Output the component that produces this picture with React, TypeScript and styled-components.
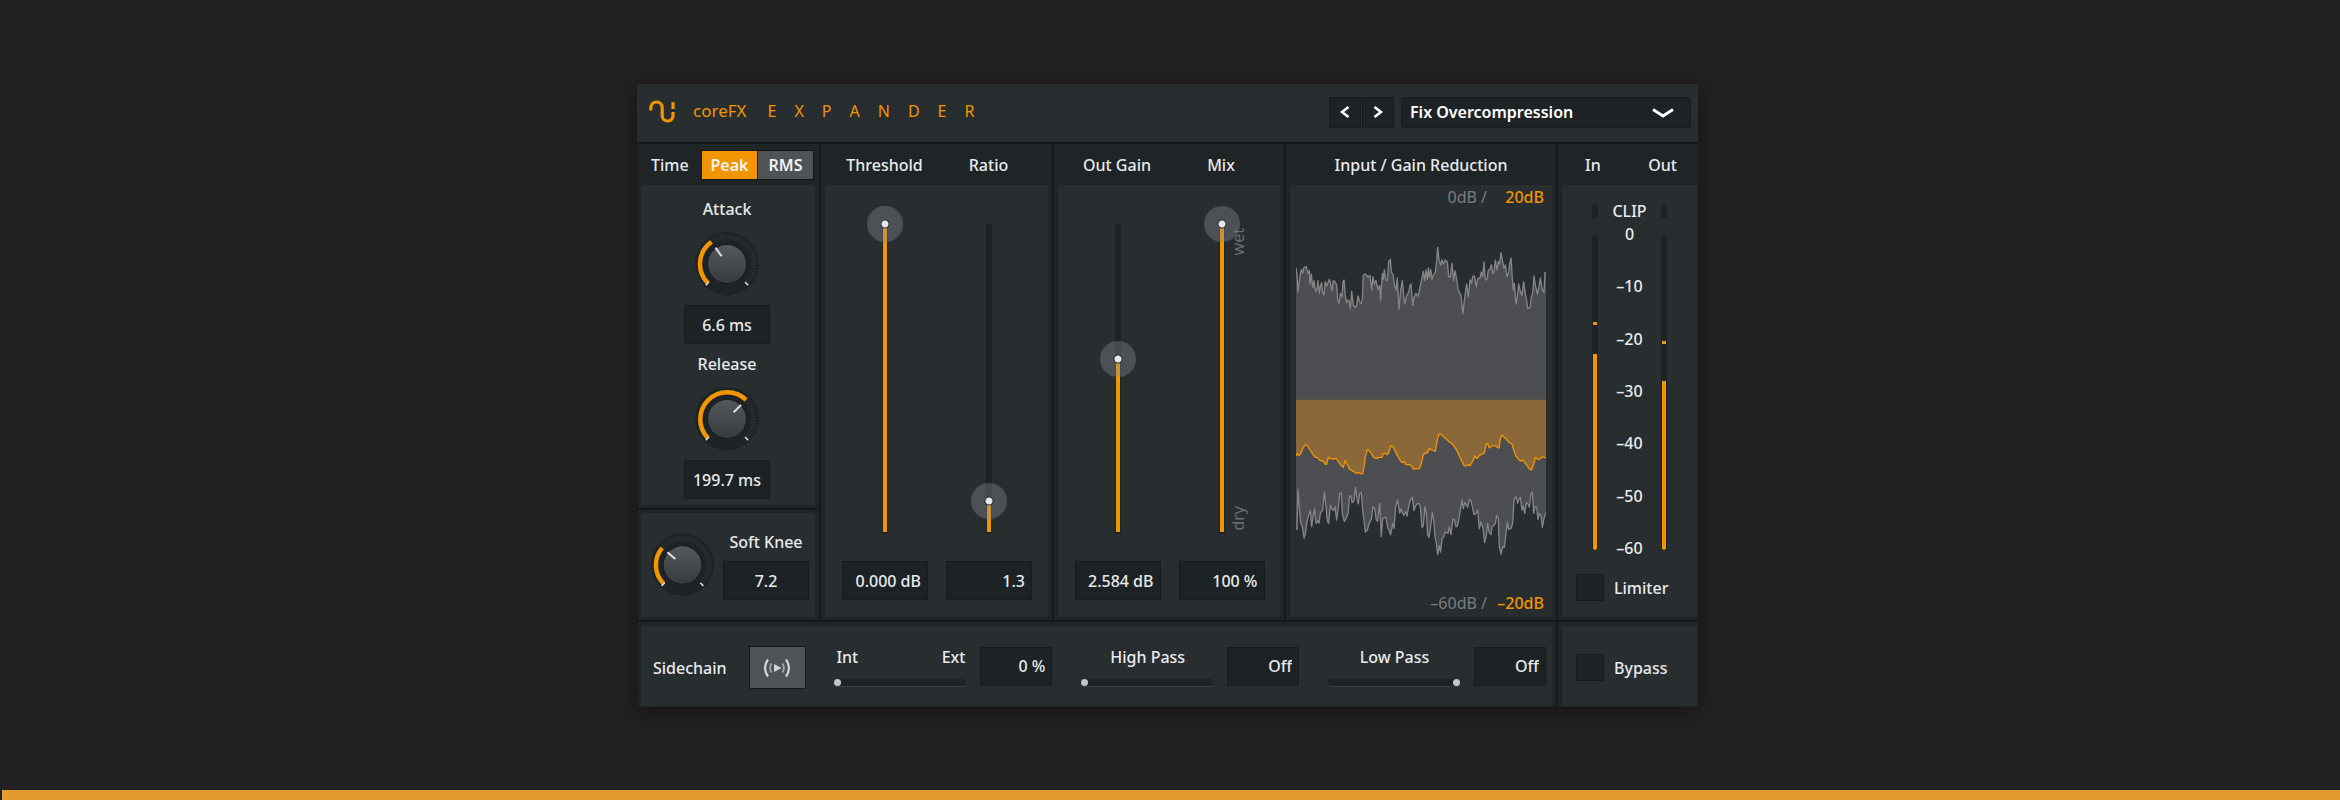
import React, { useId, useState } from 'react';
import styled, { createGlobalStyle, css } from 'styled-components';

const color = {
  page: '#222222',
  frame: '#1f2427',
  line: '#15191c',
  panel: '#282d30',
  well: '#1d2225',
  wellEdge: '#181c1f',
  accent: '#f19500',
  text: '#e9eaec',
  muted: '#7c7e80',
  key: '#4f5356',
};

const GlobalStyle = createGlobalStyle`
  *, *::before, *::after { box-sizing: border-box; }
  body {
    margin: 0;
    background: ${color.page};
    color: ${color.text};
    font-family: 'Noto Sans', 'Open Sans', sans-serif;
    font-size: 16px;
    font-weight: 500;
    line-height: 20px;
  }
  button, input, select { font: inherit; color: inherit; margin: 0; padding: 0; border: 0; border-radius: 0; }
`;

const Page = styled.div`
  min-height: 100vh;
  display: flex;
  flex-direction: column;
`;

const Stage = styled.main`
  flex: 1;
  display: flex;
  justify-content: center;
  align-items: flex-start;
  padding: 84px 5px 40px 0;
`;

const Footer = styled.div`
  height: 10px;
  margin-left: 2px;
  background: #e29b2e;
`;

const Plugin = styled.section`
  width: 100%;
  max-width: 1061px;
  background: ${color.frame};
  box-shadow: 0 4px 20px 4px rgba(0, 0, 0, 0.3);
`;

const TopBar = styled.header`
  height: 58px;
  display: flex;
  align-items: center;
  padding: 0 7px 2px 12px;
  background: ${color.panel};
`;

const Brand = styled.div`
  display: flex;
  align-items: center;
  padding-bottom: 2px;
  color: ${color.accent};
`;

const BrandName = styled.span`
  margin-left: 18px;
  font-size: 17px;
  font-weight: 400;
`;

const Product = styled.h1`
  display: flex;
  gap: 18px;
  margin: 0 auto 0 21px;
  padding-bottom: 2px;
  font-size: 16px;
  font-weight: 400;
  color: ${color.accent};
`;

const Presets = styled.div`
  display: flex;
  margin-left: auto;
`;

const StepButton = styled.button`
  width: 32px;
  height: 31px;
  margin-right: 1px;
  display: grid;
  place-items: center;
  background: ${color.well};
  border: 1px solid ${color.wellEdge};
`;

const SelectWrap = styled.div`
  position: relative;
  width: 290px;
  margin-left: 6px;
  svg {
    position: absolute;
    right: 17px;
    top: 11px;
    pointer-events: none;
  }
`;

const PresetSelect = styled.select`
  appearance: none;
  width: 100%;
  height: 31px;
  padding: 0 40px 0 8px;
  background: ${color.well};
  border: 1px solid ${color.wellEdge};
  border-radius: 3px;
  color: #fff;
  font-weight: 600;
`;

const MainGrid = styled.div`
  display: grid;
  grid-template-columns: 182fr 233fr 232fr 272fr 142fr;
  border-top: 2px solid ${color.line};
`;

const FootGrid = styled.div`
  display: grid;
  grid-template-columns: 919fr 142fr;
  border-top: 2px solid ${color.line};
`;

const Cell = styled.div<{ $edge?: 'left' | 'right' }>`
  display: flex;
  flex-direction: column;
  min-width: 0;
  padding: 0 ${p => (p.$edge === 'right' ? 1 : 4)}px 3px ${p => (p.$edge === 'left' ? 3 : 4)}px;
  border-left: ${p => (p.$edge === 'left' ? 1 : 2)}px solid ${color.line};
`;

const FootCell = styled(Cell)`
  padding-top: 4px;
  padding-bottom: 1px;
`;

const Strip = styled.div<{ $gap?: number }>`
  height: 41px;
  display: flex;
  align-items: center;
  justify-content: center;
  gap: ${p => p.$gap ?? 0}px;
`;

const StripLabel = styled.span<{ $width?: number }>`
  width: ${p => (p.$width ? `${p.$width}px` : 'auto')};
  text-align: center;
  white-space: nowrap;
`;

const TimeStrip = styled(Strip)`
  justify-content: space-between;
  padding: 0 1px 0 10px;
`;

const Segments = styled.div`
  display: flex;
  gap: 1px;
  padding: 1px;
  background: ${color.line};
`;

const Segment = styled.button<{ $on: boolean }>`
  width: 55px;
  height: 28px;
  font-weight: 600;
  color: #f4f4f5;
  background: ${p => (p.$on ? color.accent : color.key)};
`;

const panelBase = css`
  background: ${color.panel};
`;

const FaderPanel = styled.div`
  ${panelBase}
  flex: 1;
  display: flex;
  justify-content: center;
  gap: 18px;
  padding: 21px 0 17px 1px;
`;

const FaderColumn = styled.div`
  position: relative;
  display: flex;
  flex-direction: column;
  align-items: center;
  gap: 9px;
`;

const Fader = styled.input<{ $level: number }>`
  appearance: none;
  writing-mode: vertical-lr;
  direction: rtl;
  width: 36px;
  height: 346px;
  outline: none;
  background:
    linear-gradient(to top, ${color.accent} ${p => Math.round(p.$level * 310)}px, transparent 0) center 18px / 4px 308px no-repeat,
    linear-gradient(${color.well}, ${color.well}) center 18px / 6px 310px no-repeat;
  &::-webkit-slider-runnable-track { width: 36px; height: 346px; background: none; }
  &::-webkit-slider-thumb {
    appearance: none;
    width: 36px;
    height: 36px;
    border-radius: 50%;
    background: radial-gradient(circle, #e6e7ea 0 3px, #2a2c2e 4px, #2a2c2e 4px, rgba(140, 144, 150, 0.36) 5px);
  }
`;

const FaderNote = styled.span<{ $top: number }>`
  position: absolute;
  left: 49px;
  top: ${p => p.$top}px;
  writing-mode: vertical-rl;
  transform: rotate(180deg);
  font-weight: 400;
  color: #6a6e71;
`;

const ValueBox = styled.input<{ $narrow?: boolean; $align?: string }>`
  width: ${p => (p.$narrow ? 72 : 86)}px;
  height: 39px;
  padding: 0 6px;
  text-align: ${p => p.$align ?? 'right'};
  background: ${color.well};
  border: 1px solid ${color.wellEdge};
`;

const KnobPanel = styled.div`
  ${panelBase}
  display: flex;
  flex-direction: column;
  align-items: center;
  height: 320px;
  padding: 14px 2px 0 0;
`;

const KnobGroup = styled.div`
  display: flex;
  flex-direction: column;
  align-items: center;
  margin-bottom: 10px;
  svg { margin: 12px 0 8px; }
`;

const Divider = styled.div`
  height: 2px;
  margin: 3px -4px 3px -3px;
  background: ${color.line};
`;

const KneePanel = styled.div`
  ${panelBase}
  flex: 1;
  display: flex;
  align-items: center;
  gap: 8px;
  padding: 0 6px 0 9px;
`;

const KneeValue = styled.div`
  display: flex;
  flex-direction: column;
  align-items: center;
  gap: 9px;
  margin-top: 2px;
`;

const GraphPanel = styled.div`
  ${panelBase}
  flex: 1;
  display: flex;
  flex-direction: column;
  padding: 2px 6px 4px;
`;

const Range = styled.div`
  display: grid;
  grid-template-columns: 1fr 57px;
  padding-right: 2px;
  text-align: right;
  font-weight: 400;
  color: ${color.muted};
  b { font-weight: 500; color: ${color.accent}; }
`;

const Wave = styled.svg`
  display: block;
  width: 100%;
  height: 325px;
  margin: 33px 0 auto;
`;

const MeterPanel = styled.div`
  ${panelBase}
  flex: 1;
  display: flex;
  flex-direction: column;
  padding: 16px 14px 0;
`;

const Meters = styled.div`
  display: grid;
  grid-template-columns: 6px 1fr 6px;
  padding: 0 16px;
  height: 362px;
`;

const MeterColumn = styled.div`
  display: flex;
  flex-direction: column;
  gap: 16px;
  padding-top: 3px;
`;

const ClipLight = styled.div`
  height: 15px;
  border-radius: 3px;
  background: ${color.well};
  box-shadow: 0 1px 0 #303538;
`;

const MeterRail = styled.div`
  position: relative;
  height: 316px;
  border-radius: 3px;
  background: ${color.well};
`;

const MeterFill = styled.div<{ $height: number }>`
  position: absolute;
  left: 1px;
  right: 1px;
  bottom: 1px;
  height: ${p => p.$height}px;
  background: ${color.accent};
  border-radius: 0 0 2px 2px;
`;

const MeterPeak = styled.div<{ $top: number }>`
  position: absolute;
  left: 1px;
  right: 1px;
  top: ${p => p.$top}px;
  height: 3px;
  background: ${color.accent};
`;

const Scale = styled.div`
  display: flex;
  flex-direction: column;
  text-align: center;
`;

const ScaleMarks = styled.div`
  margin-top: 3px;
  display: flex;
  flex-direction: column;
  justify-content: space-between;
  height: 334px;
`;

const Check = styled.label`
  display: flex;
  align-items: center;
  gap: 10px;
`;

const CheckBox = styled.input`
  appearance: none;
  width: 28px;
  height: 27px;
  background: ${color.well};
  border: 1px solid ${color.wellEdge};
  &:checked { background: ${color.accent}; }
`;

const LimiterRow = styled.div`
  margin-top: 11px;
`;

const MeterStrip = styled(Strip)`
  justify-content: space-between;
  padding: 0 20px 0 23px;
`;

const BypassPanel = styled.div`
  ${panelBase}
  height: 80px;
  display: flex;
  align-items: center;
  padding: 3px 14px 0;
`;

const SidePanel = styled.div`
  ${panelBase}
  height: 80px;
  display: flex;
  align-items: center;
  justify-content: space-between;
  padding: 0 6px 0 12px;
`;

const SideSwitch = styled.div`
  display: flex;
  align-items: center;
  gap: 22px;
  padding-top: 3px;
`;

const ListenButton = styled.button`
  width: 57px;
  height: 43px;
  display: grid;
  place-items: center;
  background: ${color.key};
  border: 1px solid ${color.line};
`;

const FilterGroup = styled.div`
  display: flex;
  align-items: center;
  gap: 14px;
`;

const FilterControl = styled.div`
  width: 132px;
`;

const FilterLabels = styled.div<{ $spread?: boolean }>`
  display: flex;
  justify-content: ${p => (p.$spread ? 'space-between' : 'center')};
  padding: 0 1px 0 2px;
  margin-bottom: 12px;
`;

const FilterSlider = styled.input`
  appearance: none;
  display: block;
  width: 132px;
  height: 7px;
  border-radius: 4px;
  background: ${color.well};
  box-shadow: 0 1px 0 #3a3f42;
  &::-webkit-slider-thumb {
    appearance: none;
    width: 7px;
    height: 7px;
    border-radius: 50%;
    background: #c3c6c9;
  }
`;

/* Knob drawing: angles are degrees clockwise from twelve o'clock. */
const polar = (angle: number, r: number) => {
  const a = (angle * Math.PI) / 180;
  return `${(33 + r * Math.sin(a)).toFixed(2)} ${(33 - r * Math.cos(a)).toFixed(2)}`;
};
const arc = (from: number, to: number, r: number) =>
  `M${polar(from, r)}A${r} ${r} 0 ${to - from > 180 ? 1 : 0} 1 ${polar(to, r)}`;

function Knob({ angle, label }: { angle: number; label: string }) {
  const id = useId();
  return (
    <svg width="66" height="66" viewBox="0 0 66 66" role="img" aria-label={label}>
      <defs>
        <linearGradient id={id} x1="0" y1="0" x2="0" y2="1">
          <stop offset="0" stopColor="#55595c" />
          <stop offset="1" stopColor="#373b3f" />
        </linearGradient>
      </defs>
      <circle cx="33" cy="34" r="32" fill="#303538" />
      <circle cx="33" cy="33" r="32" fill="#1e2326" />
      <path d={arc(angle + 3, 132, 27)} stroke="#2b3033" strokeWidth="5" strokeDasharray="1.5 1.2" fill="none" />
      <path d={arc(-135, angle, 27)} stroke={color.accent} strokeWidth="4.5" fill="none" />
      <path d={`M${polar(-135, 25.5)}L${polar(-135, 30)}M${polar(135, 25.5)}L${polar(135, 30)}`} stroke="#d9dbdd" strokeWidth="1.6" />
      <circle cx="33" cy="33" r="20" fill="#1a1e21" />
      <circle cx="33" cy="33" r="19" fill={`url(#${id})`} />
      <path d={`M${polar(angle, 9.5)}L${polar(angle, 20)}`} stroke="#dfe1e3" strokeWidth="2" />
    </svg>
  );
}

const inputTop =
  '0,83 3,104 6,155 12,108 16,88 20,100 24,82 31,80 36,100 40,92 42,132 46,102 50,142 54,122 59,155 63,148 66,122 70,160 73,140 77,128 80,158 84,165 88,124 92,138 96,128 100,118 104,132 108,152 112,122 118,126 122,136 125,180 129,190 133,160 138,170 141,125 144,120 148,168 152,188 155,180 159,182 163,206 167,154 172,196 178,202 182,196 186,168 192,188 196,190 199,178 202,105 209,102 216,112 222,106 227,150 231,110 235,132 240,122 246,148 251,136 254,182 259,100 262,118 265,88 269,118 274,122 278,64 283,58 286,96 291,104 296,138 300,150 304,114 309,208 314,150 319,122 323,168 326,192 332,166 338,158 342,136 345,132 350,196 354,172 360,160 366,170 372,142 376,124 382,94 386,122 390,90 394,118 397,84 400,112 404,88 408,118 412,105 418,98 422,62 425,22 429,60 434,75 438,60 442,72 448,60 454,66 458,110 463,112 468,70 473,122 477,92 482,118 486,146 490,158 494,162 498,196 501,220 504,190 508,158 512,132 517,170 522,120 526,130 530,110 535,108 541,140 545,116 552,114 556,96 560,110 564,66 568,120 573,118 577,90 582,88 586,74 590,100 594,96 598,60 603,90 607,64 611,72 615,38 619,60 624,85 628,75 633,110 638,98 641,72 645,54 649,118 652,150 655,130 660,192 666,156 668,132 674,158 678,166 683,125 687,156 691,176 695,205 702,202 706,172 710,160 714,108 719,140 724,162 729,140 733,114 738,146 744,158 747,98 750,96';

const inputBottom =
  '750,818 744,835 739,862 735,826 730,820 726,838 722,800 717,800 713,820 709,756 705,762 700,802 696,792 691,788 686,820 682,798 678,810 673,772 668,780 665,790 660,770 654,778 650,850 645,866 638,868 634,846 630,880 625,922 620,920 615,942 610,920 607,834 602,826 598,850 592,858 588,860 585,884 580,878 575,850 571,886 566,908 561,866 555,846 550,866 545,810 540,820 534,824 529,800 524,780 520,778 515,802 511,795 506,788 502,806 498,780 493,810 488,840 484,858 480,860 476,840 471,836 465,884 460,860 456,880 452,878 447,876 443,892 438,896 434,936 430,918 425,944 421,908 417,890 413,840 409,818 405,850 399,892 395,884 391,820 387,800 382,858 378,864 373,800 369,790 363,792 359,798 354,812 349,772 343,780 338,800 333,828 329,814 324,826 319,818 315,806 311,820 305,780 299,800 294,866 290,850 284,884 279,870 275,862 270,832 266,832 260,836 256,890 251,790 245,844 241,840 236,806 231,800 226,838 220,848 214,870 208,876 204,840 200,812 196,758 191,760 187,792 183,776 178,742 174,782 168,788 165,768 161,768 156,820 150,836 145,844 139,820 136,758 131,762 127,802 122,840 117,800 112,812 107,806 103,796 98,850 94,842 90,800 85,756 80,810 73,820 69,850 66,842 60,850 56,806 52,826 47,860 43,812 38,826 33,844 28,880 24,894 19,860 14,848 10,800 6,748 3,868 0,864';

const reduction =
  '0,648 4,640 9,647 15,638 22,622 28,614 34,616 42,630 50,642 58,652 64,652 72,662 80,662 88,672 92,673 97,652 104,656 112,657 120,655 127,664 134,675 142,682 147,662 153,672 160,686 166,691 173,694 180,700 187,698 194,701 200,701 204,680 208,650 214,629 219,631 226,640 233,652 241,655 250,652 258,652 262,640 268,640 274,644 279,634 284,618 290,618 296,630 304,646 312,660 318,668 324,664 330,674 338,674 345,676 352,687 360,686 370,686 376,670 382,644 388,638 393,640 400,626 408,630 418,634 424,600 429,582 436,583 444,592 452,598 460,606 468,611 475,620 482,630 490,648 498,664 504,676 510,678 516,674 522,677 530,664 537,648 543,656 550,646 560,642 566,636 570,614 575,610 580,624 588,618 596,616 604,622 609,624 614,592 618,585 624,592 632,598 640,608 648,612 654,634 660,648 668,658 674,664 680,660 690,672 698,684 706,690 712,676 718,652 725,658 732,656 740,650 750,654';

function Waveform() {
  return (
    <Wave viewBox="0 0 750 975" preserveAspectRatio="none" role="img" aria-label="Input level and gain reduction over time">
      <polygon points={`${inputTop} ${inputBottom}`} fill="#4d4e51" />
      <polygon points={`0,479 ${reduction} 750,479`} fill="#8a683a" />
      <polyline points={inputTop} fill="none" stroke="#858587" strokeWidth="4" strokeLinejoin="round" />
      <polyline points={inputBottom} fill="none" stroke="#858587" strokeWidth="4" strokeLinejoin="round" />
      <polyline points={reduction} fill="none" stroke={color.accent} strokeWidth="4" strokeLinejoin="round" />
    </Wave>
  );
}

type FaderData = { name: string; level: number; value: string };

const faders: Record<string, FaderData> = {
  threshold: { name: 'Threshold', level: 1000, value: '0.000 dB' },
  ratio: { name: 'Ratio', level: 108, value: '1.3' },
  gain: { name: 'Out Gain', level: 565, value: '2.584 dB' },
  mix: { name: 'Mix', level: 1000, value: '100 %' },
};

function FaderStrip({ data, children }: { data: FaderData; children?: React.ReactNode }) {
  const [level, setLevel] = useState(data.level);
  return (
    <FaderColumn>
      <Fader
        type="range"
        min={0}
        max={1000}
        value={level}
        $level={level / 1000}
        aria-label={data.name}
        onChange={e => setLevel(Number(e.target.value))}
      />
      {children}
      <ValueBox aria-label={`${data.name} value`} defaultValue={data.value} />
    </FaderColumn>
  );
}

function FaderCell({ items, notes }: { items: FaderData[]; notes?: React.ReactNode }) {
  return (
    <Cell>
      <Strip $gap={18}>
        {items.map(i => (
          <StripLabel key={i.name} $width={86}>{i.name}</StripLabel>
        ))}
      </Strip>
      <FaderPanel>
        {items.map((i, n) => (
          <FaderStrip key={i.name} data={i}>{n === items.length - 1 ? notes : null}</FaderStrip>
        ))}
      </FaderPanel>
    </Cell>
  );
}

function Meter({ fill, peak }: { fill: number; peak: number }) {
  return (
    <MeterColumn>
      <ClipLight />
      <MeterRail>
        <MeterPeak $top={peak} />
        <MeterFill $height={fill} />
      </MeterRail>
    </MeterColumn>
  );
}

function Filter({ labels, name, position, value }: { labels: string[]; name: string; position: number; value: string }) {
  return (
    <FilterGroup>
      <FilterControl>
        <FilterLabels $spread={labels.length > 1}>
          {labels.map(l => <span key={l}>{l}</span>)}
        </FilterLabels>
        <FilterSlider type="range" min={0} max={100} defaultValue={position} aria-label={name} />
      </FilterControl>
      <ValueBox $narrow aria-label={`${name} value`} defaultValue={value} />
    </FilterGroup>
  );
}

export default function App() {
  const [mode, setMode] = useState('Peak');
  return (
    <>
      <GlobalStyle />
      <Page>
        <Stage>
          <Plugin>
            <TopBar>
              <Brand>
                <svg width="26" height="23" viewBox="0 0 26 23" fill="none" stroke="currentColor" strokeWidth="3.2" aria-hidden="true">
                  <path d="M1.8 10.5V8.2C1.8 4.500 4 2 7.500 2s5.700 2.500 5.700 6v7.500c0 3.300 2 5.500 5.400 5.500S24 18.800 24 15.500V12" />
                  <path d="M24 2.200V9" />
                </svg>
                <BrandName>coreFX</BrandName>
              </Brand>
              <Product aria-label="Expander">
                {'EXPANDER'.split('').map((c, i) => <span key={i}>{c}</span>)}
              </Product>
              <Presets>
                <StepButton aria-label="Previous preset">
                  <svg width="10" height="12" viewBox="0 0 10 12" fill="none" stroke="#fff" strokeWidth="2.6"><path d="M8.5 1L2 6l6.500 5" /></svg>
                </StepButton>
                <StepButton aria-label="Next preset">
                  <svg width="10" height="12" viewBox="0 0 10 12" fill="none" stroke="#fff" strokeWidth="2.6"><path d="M1.500 1L8 6l-6.500 5" /></svg>
                </StepButton>
                <SelectWrap>
                  <PresetSelect aria-label="Preset" defaultValue="fix">
                    <option value="fix">Fix Overcompression</option>
                  </PresetSelect>
                  <svg width="22" height="11" viewBox="0 0 22 11" fill="none" stroke="#fff" strokeWidth="2.8"><path d="M1 1.500l10 6.500 10-6.500" /></svg>
                </SelectWrap>
              </Presets>
            </TopBar>

            <MainGrid>
              <Cell $edge="left">
                <TimeStrip>
                  <span>Time</span>
                  <Segments>
                    {['Peak', 'RMS'].map(m => (
                      <Segment key={m} $on={mode === m} aria-pressed={mode === m} onClick={() => setMode(m)}>{m}</Segment>
                    ))}
                  </Segments>
                </TimeStrip>
                <KnobPanel>
                  <KnobGroup>
                    <span>Attack</span>
                    <Knob angle={-35} label="Attack" />
                    <ValueBox $align="center" aria-label="Attack value" defaultValue="6.6 ms" />
                  </KnobGroup>
                  <KnobGroup>
                    <span>Release</span>
                    <Knob angle={45} label="Release" />
                    <ValueBox $align="center" aria-label="Release value" defaultValue="199.7 ms" />
                  </KnobGroup>
                </KnobPanel>
                <Divider />
                <KneePanel>
                  <Knob angle={-50} label="Soft Knee" />
                  <KneeValue>
                    <span>Soft Knee</span>
                    <ValueBox $align="center" aria-label="Soft Knee value" defaultValue="7.2" />
                  </KneeValue>
                </KneePanel>
              </Cell>

              <FaderCell items={[faders.threshold, faders.ratio]} />
              <FaderCell
                items={[faders.gain, faders.mix]}
                notes={<><FaderNote $top={22}>wet</FaderNote><FaderNote $top={300}>dry</FaderNote></>}
              />

              <Cell>
                <Strip><StripLabel>Input / Gain Reduction</StripLabel></Strip>
                <GraphPanel>
                  <Range><span>0dB /</span><b>20dB</b></Range>
                  <Waveform />
                  <Range><span>–60dB /</span><b>–20dB</b></Range>
                </GraphPanel>
              </Cell>

              <Cell $edge="right">
                <MeterStrip><span>In</span><span>Out</span></MeterStrip>
                <MeterPanel>
                  <Meters>
                    <Meter fill={196} peak={87} />
                    <Scale>
                      <span>CLIP</span>
                      <ScaleMarks>
                        {['0', '–10', '–20', '–30', '–40', '–50', '–60'].map(m => <span key={m}>{m}</span>)}
                      </ScaleMarks>
                    </Scale>
                    <Meter fill={169} peak={106} />
                  </Meters>
                  <LimiterRow><Check><CheckBox type="checkbox" />Limiter</Check></LimiterRow>
                </MeterPanel>
              </Cell>
            </MainGrid>

            <FootGrid>
              <FootCell $edge="left">
                <SidePanel>
                  <SideSwitch>
                    <span>Sidechain</span>
                    <ListenButton aria-label="Listen to sidechain">
                      <svg width="28" height="20" viewBox="0 0 28 20" fill="none" stroke="#d2d4d6">
                        <path d="M11 6l7.500 4-7.500 4z" fill="#d2d4d6" stroke="none" />
                        <path d="M8.500 5.500Q5.500 10 8.500 14.500M19.500 5.500Q22.500 10 19.500 14.500" strokeWidth="1.600" opacity=".7" />
                        <path d="M5 1.500Q-1 10 5 18.500M23 1.500Q29 10 23 18.500" strokeWidth="2.200" />
                      </svg>
                    </ListenButton>
                  </SideSwitch>
                  <Filter labels={['Int', 'Ext']} name="Sidechain source" position={0} value="0 %" />
                  <Filter labels={['High Pass']} name="High Pass" position={0} value="Off" />
                  <Filter labels={['Low Pass']} name="Low Pass" position={100} value="Off" />
                </SidePanel>
              </FootCell>
              <FootCell $edge="right">
                <BypassPanel><Check><CheckBox type="checkbox" />Bypass</Check></BypassPanel>
              </FootCell>
            </FootGrid>
          </Plugin>
        </Stage>
        <Footer />
      </Page>
    </>
  );
}
